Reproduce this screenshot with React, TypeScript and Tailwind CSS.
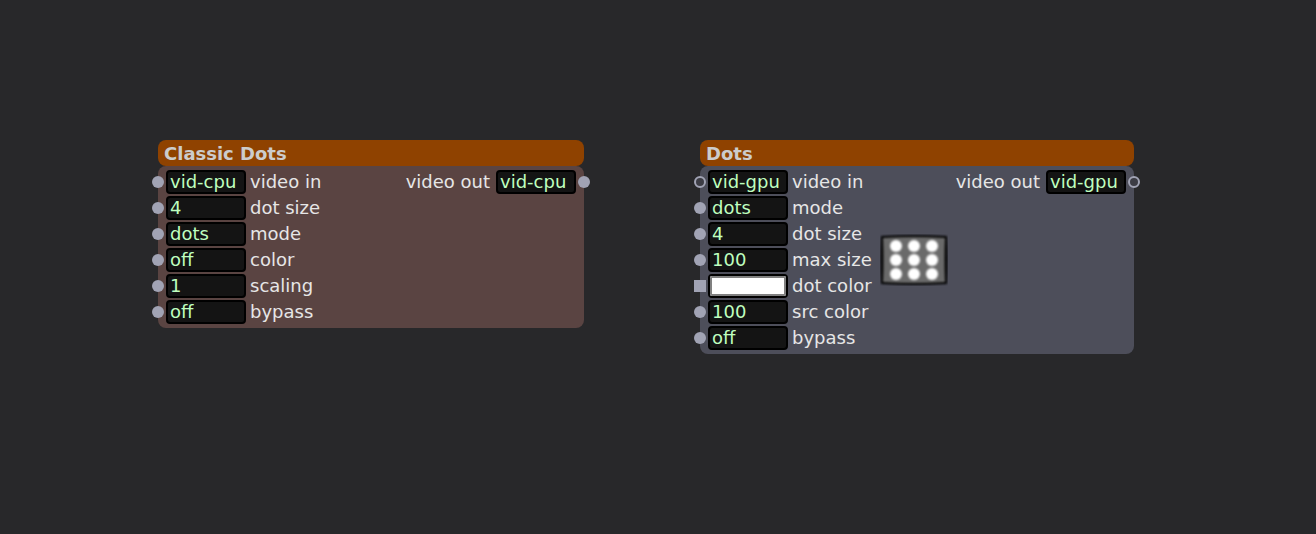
import { useState } from "react"

type Port = "dot" | "ring" | "square"

type Input = {
    label: string
    value: string
    port?: Port
}

const classicInputs: Input[] = [
    { label: "video in", value: "vid-cpu" },
    { label: "dot size", value: "4" },
    { label: "mode", value: "dots" },
    { label: "color", value: "off" },
    { label: "scaling", value: "1" },
    { label: "bypass", value: "off" },
]

const dotsInputs: Input[] = [
    { label: "video in", value: "vid-gpu", port: "ring" },
    { label: "mode", value: "dots" },
    { label: "dot size", value: "4" },
    { label: "max size", value: "100" },
    { label: "dot color", value: "#ffffff", port: "square" },
    { label: "src color", value: "100" },
    { label: "bypass", value: "off" },
]

const portStyles = {
    dot: "size-3 shrink-0 rounded-full bg-[#a1a3b4]",
    ring: "size-3 shrink-0 rounded-full border-2 border-[#a1a3b4] bg-[#3c3c44]",
    square: "size-3 shrink-0 bg-[#a1a3b4]",
}

const fieldStyle = "h-6 w-20 shrink-0 rounded-sm border-2 border-black bg-[#141414] px-0.5 text-[#bfffbf] outline-none"
const colorStyle = "h-6 w-20 shrink-0 appearance-none rounded-sm border-2 border-black bg-black p-0 [&::-webkit-color-swatch-wrapper]:p-0 [&::-webkit-color-swatch]:rounded-none [&::-webkit-color-swatch]:border-2 [&::-webkit-color-swatch]:border-[#808080]"

const Field = ({ id, value }: { id: string, value: string }) => {
    const [text, setText] = useState(value)
    const isColor = value.startsWith("#")

    return (
        <input
            id={id}
            type={isColor ? "color" : "text"}
            value={text}
            onChange={(e) => setText(e.target.value)}
            className={isColor ? colorStyle : fieldStyle}
        />
    )
}

// 3x3 dots thumbnail shown on the gpu actor
const DotsThumbnail = () => (
    <svg viewBox="0 0 68 52" className="absolute left-[180px] top-[68px] h-[52px] w-[68px]" aria-hidden="true">
        <defs>
            <filter id="edge" x="-10%" y="-10%" width="120%" height="120%" colorInterpolationFilters="sRGB">
                <feGaussianBlur stdDeviation="0.8" />
            </filter>
            <filter id="glow" x="-30%" y="-30%" width="160%" height="160%" colorInterpolationFilters="sRGB">
                <feGaussianBlur stdDeviation="0.8" />
            </filter>
        </defs>
        <path d="M1 2Q34 0 67 2Q68 26 67 50Q34 52 1 50Q0 26 1 2Z" fill="#050505" filter="url(#edge)" />
        <path d="M3 4Q34 2 65 4Q64 26 65 48Q34 50 3 48Q4 26 3 4Z" fill="#6a6a6a" filter="url(#edge)" />
        <g fill="#ffffff" filter="url(#glow)">
            {[12, 26, 40].map((y) => [16, 34, 52].map((x) => (
                <circle key={`${x}-${y}`} cx={x} cy={y} r="6" />
            )))}
        </g>
    </svg>
)

type ActorProps = {
    id: string
    title: string
    inputs: Input[]
    output: string
    outPort?: Port
    gpu?: boolean
}

const Actor = ({ id, title, inputs, output, outPort = "dot", gpu }: ActorProps) => {
    return (
        <section className={gpu ? "w-[434px]" : "w-[426px]"}>
            <h2 className="h-[26px] rounded-lg bg-[#8f4200] px-1.5 font-bold leading-7 text-[#cccccc]">{title}</h2>
            <div className={`relative flex justify-between rounded-lg py-1 ${gpu ? "bg-[#4d4e5a]" : "bg-[#5a4442]"}`}>
                <div className="-ml-1.5 flex flex-col gap-0.5">
                    {inputs.map(({ label, value, port = "dot" }) => (
                        <div key={label} className="flex h-6 items-center gap-0.5">
                            <span className={portStyles[port]} />
                            <Field id={`${id}-${label.replace(" ", "-")}`} value={value} />
                            <label htmlFor={`${id}-${label.replace(" ", "-")}`} className="pl-0.5">{label}</label>
                        </div>
                    ))}
                </div>
                <div className="-mr-1.5 flex h-6 items-center gap-0.5">
                    <label htmlFor={`${id}-video-out`} className="pr-1">video out</label>
                    <Field id={`${id}-video-out`} value={output} />
                    <span className={portStyles[outPort]} />
                </div>
                {gpu && <DotsThumbnail />}
            </div>
        </section>
    )
}

const App = () => {
    return (
        <main className="flex min-h-screen flex-wrap content-start items-start gap-x-[116px] gap-y-12 bg-[#28282a] px-[158px] py-[140px] font-['DejaVu_Sans',Verdana,sans-serif] text-[18px] leading-6 text-[#e6e6e6]">
            <Actor id="classic" title="Classic Dots" inputs={classicInputs} output="vid-cpu" />
            <Actor id="dots" title="Dots" inputs={dotsInputs} output="vid-gpu" outPort="ring" gpu />
        </main>
    )
}

export default App
